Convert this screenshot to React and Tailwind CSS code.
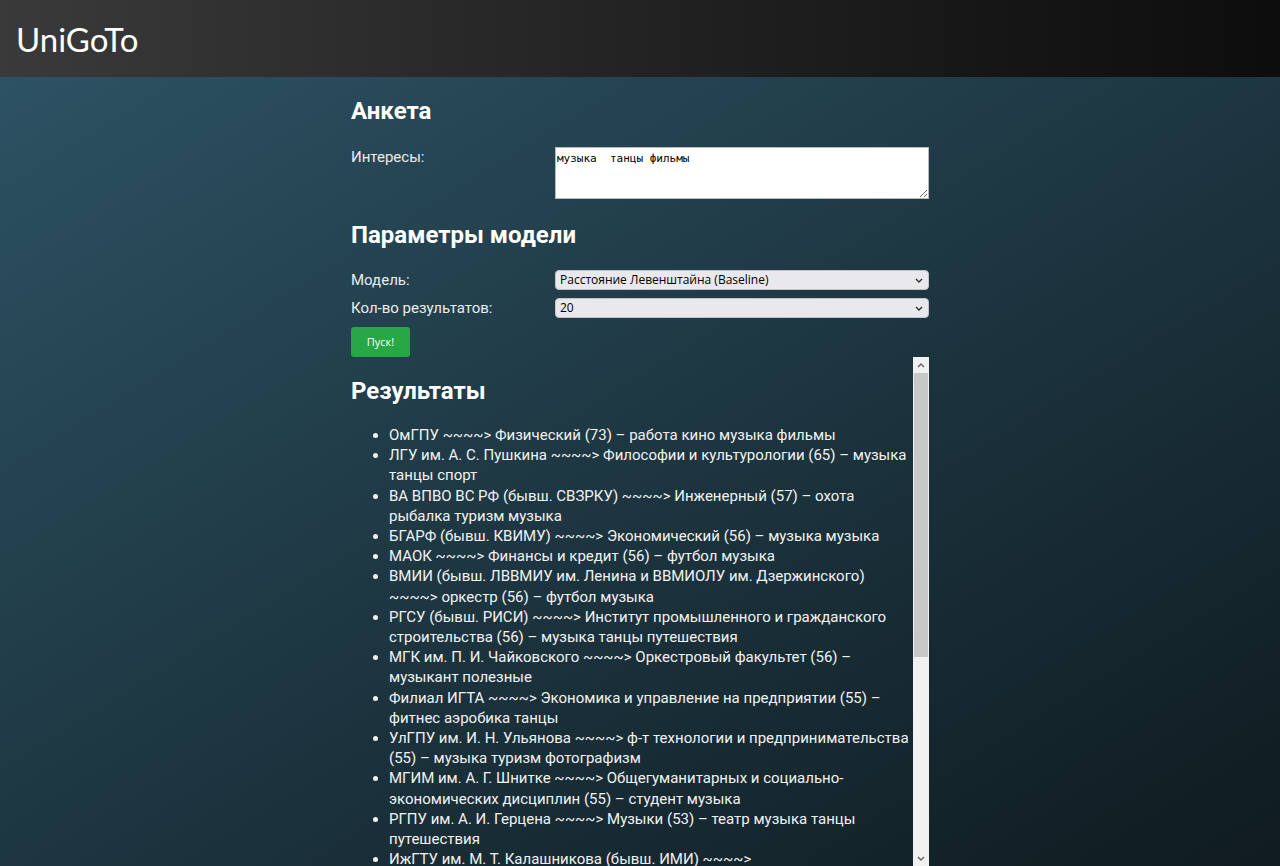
import { useState } from 'react';

const results = [
  'ОмГПУ ~~~~> Физический (73) – работа кино музыка фильмы',
  'ЛГУ им. А. С. Пушкина ~~~~> Философии и культурологии (65) – музыка танцы спорт',
  'ВА ВПВО ВС РФ (бывш. СВЗРКУ) ~~~~> Инженерный (57) – охота рыбалка туризм музыка',
  'БГАРФ (бывш. КВИМУ) ~~~~> Экономический (56) – музыка музыка',
  'МАОК ~~~~> Финансы и кредит (56) – футбол музыка',
  'ВМИИ (бывш. ЛВВМИУ им. Ленина и ВВМИОЛУ им. Дзержинского) ~~~~> оркестр (56) – футбол музыка',
  'РГСУ (бывш. РИСИ) ~~~~> Институт промышленного и гражданского строительства (56) – музыка танцы путешествия',
  'МГК им. П. И. Чайковского ~~~~> Оркестровый факультет (56) – музыкант полезные',
  'Филиал ИГТА ~~~~> Экономика и управление на предприятии (55) – фитнес аэробика танцы',
  'УлГПУ им. И. Н. Ульянова ~~~~> ф-т технологии и предпринимательства (55) – музыка туризм фотографизм',
  'МГИМ им. А. Г. Шнитке ~~~~> Общегуманитарных и социально-экономических дисциплин (55) – студент музыка',
  'РГПУ им. А. И. Герцена ~~~~> Музыки (53) – театр музыка танцы путешествия',
  'ИжГТУ им. М. Т. Калашникова (бывш. ИМИ) ~~~~> Приборостроительный (53) – музыка кино',
  'СПбГУКИ ~~~~> Музыкального искусства (53) – музыка танцы',
  'КГУ им. К. Э. Циолковского ~~~~> Искусств (52) – танцы музыка фильмы',
  'ТГПУ им. Л. Н. Толстого ~~~~> Художественно-графический (52) – музыка кино',
  'ЮФУ ~~~~> Педагогический институт (52) – спорт музыка',
  'СГУ им. Н. Г. Чернышевского ~~~~> Институт искусств (51) – танцы театр музыка',
  'ПГУ ~~~~> Историко-филологический (51) – фильмы музыка',
  'НГПУ ~~~~> Факультет культуры и искусства (50) – музыка танцы',
];

function Chevron({ up, color = '#606060' }) {
  return (
    <svg width="8" height="5" viewBox="0 0 8 5">
      <path d={up ? 'M1 4 L4 1 L7 4' : 'M1 1 L4 4 L7 1'} fill="none" stroke={color} strokeWidth="1.4" />
    </svg>
  );
}

function Select({ value, onChange, children }) {
  return (
    <div className="relative w-[374px] h-[20px]">
      <select
        value={value}
        onChange={onChange}
        className="block appearance-none w-full h-full rounded-[4px] bg-[#e9e9ed] text-[12px] leading-[18px] text-black pl-[4px] border border-[#c4c4c8] font-['Open_Sans',sans-serif]"
      >
        {children}
      </select>
      <span className="pointer-events-none absolute right-[6px] top-[8px] flex">
        <Chevron color="#303030" />
      </span>
    </div>
  );
}

export default function App() {
  const [interests, setInterests] = useState('музыка  танцы фильмы');
  const [model, setModel] = useState('lev');
  const [count, setCount] = useState('20');

  const labelStyle = 'w-[204px] shrink-0 text-[15px] leading-[20px] text-[#ececec]';

  return (
    <div className="h-screen flex flex-col overflow-hidden font-['Roboto',sans-serif]">
      <header className="h-[77px] shrink-0 flex items-center px-4 bg-gradient-to-r from-[#3a3a3a] to-[#0d0d0d]">
        <span className="text-[33px] text-white font-['Lato',sans-serif] font-normal pt-[2px]">UniGoTo</span>
      </header>

      <main className="flex-1 bg-gradient-to-br from-[#2d5263] via-[#1d3641] to-[#0f1b20]">
        <div className="w-[578px] mx-auto flex flex-col text-[#ececec]">
          <h2 className="text-[24px] font-bold text-white pt-[20px] leading-[28px]">Анкета</h2>

          <div className="flex items-start mt-[22px]">
            <label className={labelStyle}>Интересы:</label>
            <textarea
              value={interests}
              onChange={(e) => setInterests(e.target.value)}
              className="w-[374px] h-[52px] bg-white border border-[#b8b8b8] text-black text-[11px] leading-[13px] px-[1px] py-[4px] font-['DejaVu_Sans_Mono',monospace]"
            />
          </div>

          <h2 className="text-[24px] font-bold text-white mt-[22px] leading-[28px]">Параметры модели</h2>

          <div className="flex items-center mt-[21px]">
            <label className={labelStyle}>Модель:</label>
            <Select value={model} onChange={(e) => setModel(e.target.value)}>
              <option value="lev">Расстояние Левенштайна (Baseline)</option>
              <option value="w2v">Word2Vec</option>
            </Select>
          </div>

          <div className="flex items-center mt-[8px]">
            <label className={labelStyle}>Кол-во результатов:</label>
            <Select value={count} onChange={(e) => setCount(e.target.value)}>
              <option value="10">10</option>
              <option value="20">20</option>
              <option value="50">50</option>
            </Select>
          </div>

          <div className="mt-[9px]">
            <button className="w-[59px] h-[30px] rounded-[3px] bg-[#28a745] text-white text-[11px] font-['Open_Sans',sans-serif]">Пуск!</button>
          </div>

          <div className="flex h-[509px]">
            <div className="flex-1 overflow-y-scroll [scrollbar-width:none]">
              <h2 className="text-[24px] font-bold text-white mt-[20px] leading-[28px]">Результаты</h2>
              <ul className="list-disc pl-[38px] mt-[20px] mb-[20px] text-[15px] leading-[20.2px] text-[#f2f2f2]">
                {results.map((r, i) => (
                  <li key={i}>{r}</li>
                ))}
              </ul>
            </div>
            <div className="w-[16px] shrink-0 bg-[#f1f1f1] flex flex-col">
              <div className="h-[16px] flex items-center justify-center">
                <Chevron up />
              </div>
              <div className="flex-1 flex flex-col">
                <div className="h-[284px] bg-[#c8c8c8] mx-[1px]" />
              </div>
              <div className="h-[16px] flex items-center justify-center">
                <Chevron />
              </div>
            </div>
          </div>
        </div>
      </main>
    </div>
  );
}
